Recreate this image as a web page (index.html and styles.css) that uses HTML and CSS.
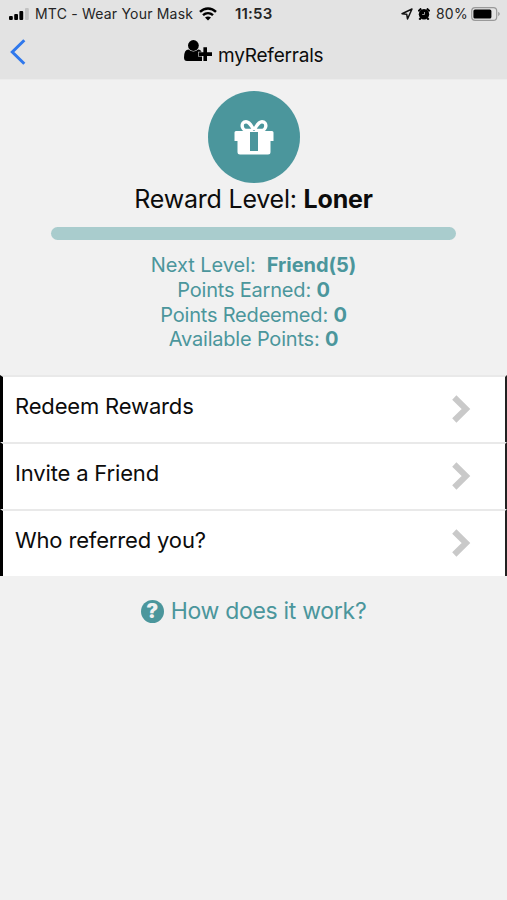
FILE: index.html
```html
<!DOCTYPE html>
<html lang="en">
<head>
  <meta charset="UTF-8">
  <meta name="viewport" content="width=device-width, initial-scale=1.0">
  <title>myReferrals</title>
  <link rel="stylesheet" href="styles.css">
</head>
<body>
  <header class="header">
    <div class="status-bar">
      <svg class="signal" width="20" height="12" viewBox="0 0 20 12">
        <rect x="0" y="8" width="3.8" height="4" rx="1"/>
        <rect x="5.2" y="6" width="3.8" height="6" rx="1"/>
        <rect x="10.4" y="3" width="3.8" height="9" rx="1"/>
        <rect x="16" y="0" width="3.8" height="12" rx="1" fill="#c2c2c2"/>
      </svg>
      <span class="carrier">MTC - Wear Your Mask</span>
      <svg class="wifi" width="18" height="14" viewBox="0 0 18 14" fill="none" stroke="#000" stroke-width="2.4">
        <path d="M1 4.9C5.6 .3 12.4 .3 17 4.9"/>
        <path d="M4 8.2C7 5.4 11 5.4 14 8.2"/>
        <path d="M9 13.6L6 10.6Q9 8.2 12 10.6Z" fill="#000" stroke="none"/>
      </svg>
      <span class="time">11:53</span>
      <div class="status-right">
        <svg width="12" height="12" viewBox="0 0 12 12" fill="none" stroke="#111" stroke-width="1.5" stroke-linejoin="round">
          <path d="M1 5.7L11 1L6.5 11L5.7 6.2Z"/>
        </svg>
        <svg class="alarm" width="12" height="12" viewBox="0 0 12 12">
          <circle cx="6" cy="6.3" r="5.2"/>
          <path d="M.3 3.4L3.2 .5M11.7 3.4L8.8 .5M2.8 10L1.3 11.7M9.2 10l1.500 1.700" stroke="#000" stroke-width="2"/>
          <path d="M6.500 4V6.500H4.200" fill="none" stroke="#bbb" stroke-width=".8"/>
        </svg>
        <span class="percent">80%</span>
        <svg class="battery" width="30" height="14" viewBox="0 0 30 14">
          <rect x=".7" y=".7" width="25" height="12.6" rx="3.4" fill="none" stroke="#999" stroke-width="1.2"/>
          <rect x="2.4" y="2.4" width="18" height="9.2" rx="1.6"/>
          <path d="M27.2 4.8Q30.4 7 27.2 9.2Z" fill="#999"/>
        </svg>
      </div>
    </div>
    <div class="nav-bar">
      <a class="back" href="#" aria-label="Back">
        <svg width="16" height="26" viewBox="0 0 16 26" fill="none" stroke="#2f78ec" stroke-width="3">
          <path d="M14.3 1.3L2.3 13L14.3 24.7"/>
        </svg>
      </a>
      <svg class="user-icon" width="29" height="22" viewBox="0 0 29 22">
        <circle cx="9.4" cy="5.5" r="5.4"/>
        <path d="M4.600 9.500Q9.400 13.500 14.200 9.500C16 9.600 17 10.500 17.600 11.800H14V16.400H18V21H3Q0 21 0 17.500Q0 9.700 4.600 9.500Z"/>
        <path d="M21.200 7.300V20.900M14.600 14.100H28" stroke="#000" stroke-width="3.600"/>
      </svg>
      <h1 class="title">myReferrals</h1>
    </div>
  </header>

  <main class="content">
    <div class="badge">
      <svg width="40" height="36" viewBox="0 0 40 36">
        <g fill="none" stroke="#fff" stroke-width="3.400">
          <path d="M19 11.500H13C7 11.500 6.500 2.700 12 2.700C16 2.700 17.500 7.500 20 11"/>
          <path d="M21 11.500H27C33 11.500 33.500 2.700 28 2.700C24 2.700 22.500 7.500 20 11"/>
        </g>
        <path d="M2 12H38Q39.500 12 39.500 13.500V22H36.500V33Q36.500 35.500 34 35.500H6Q3.500 35.500 3.500 33V22H.5V13.500Q.5 12 2 12Z" fill="#fff"/>
        <path d="M16 13H24V32H16Z" fill="#4b969c"/>
      </svg>
    </div>
    <p class="level">Reward Level: <b>Loner</b></p>
    <div class="progress"></div>

    <div class="points">
      <p class="next-level">Next Level: &nbsp;<b>Friend(5)</b></p>
      <p>Points Earned: <b>0</b></p>
      <p>Points Redeemed: <b>0</b></p>
      <p>Available Points: <b>0</b></p>
    </div>

    <nav class="menu">
      <a class="menu-item" href="#">
        <span>Redeem Rewards</span>
        <svg class="chevron" width="19" height="28" viewBox="0 0 19 28"><path d="M2.300 2.500L14 14L2.300 25.500"/></svg>
      </a>
      <a class="menu-item" href="#">
        <span>Invite a Friend</span>
        <svg class="chevron" width="19" height="28" viewBox="0 0 19 28"><path d="M2.300 2.500L14 14L2.300 25.500"/></svg>
      </a>
      <a class="menu-item" href="#">
        <span>Who referred you?</span>
        <svg class="chevron" width="19" height="28" viewBox="0 0 19 28"><path d="M2.300 2.500L14 14L2.300 25.500"/></svg>
      </a>
    </nav>

    <a class="help" href="#"><span class="help-icon">?</span><span>How does it work?</span></a>
  </main>
</body>
</html>
```
FILE: styles.css
```css
* {
  box-sizing: border-box;
}

body {
  margin: 0;
  min-height: 100vh;
  font-family: 'Inter', sans-serif;
  background: #f1f1f1;
  color: #0c0c0c;
}

p,
h1 {
  margin: 0;
  white-space: nowrap;
}

a {
  color: inherit;
  text-decoration: none;
}

svg {
  display: block;
  flex: none;
}

.header {
  height: 80px;
  background: #e3e3e3;
  border-bottom: 1px solid #ececec;
}

.status-bar {
  display: flex;
  align-items: center;
  height: 27px;
  padding: 0 6px 0 9px;
  font-size: 14px;
  color: #252525;
  white-space: nowrap;
}

.carrier {
  width: 159px;
  margin: 0 5px 0 6px;
  letter-spacing: 0.2px;
}

.time {
  margin-left: 18px;
  font-size: 15px;
  font-weight: 600;
  letter-spacing: 0.2px;
}

.status-right {
  display: flex;
  align-items: center;
  margin-left: auto;
}

.alarm {
  margin: 0 6px 0 5px;
}

.percent {
  width: 32px;
  margin-right: 3px;
  letter-spacing: 0.2px;
}

.nav-bar {
  display: flex;
  height: 52px;
  padding-left: 10px;
}

.back {
  width: 174px;
  padding-top: 12px;
}

.user-icon {
  margin-top: 13px;
}

.title {
  margin: 17px 0 0 5px;
  font-size: 19px;
  font-weight: 400;
  line-height: 24px;
  letter-spacing: -0.2px;
}

.content {
  display: flex;
  flex-direction: column;
  align-items: center;
  padding-top: 11px;
}

.badge {
  display: flex;
  align-items: center;
  justify-content: center;
  width: 92px;
  height: 92px;
  border-radius: 50%;
  background: #4b969c;
}

.level {
  font-size: 25px;
  line-height: 32px;
  letter-spacing: -0.22px;
}

.level b {
  font-weight: 700;
}

.progress {
  width: 405px;
  height: 13px;
  margin-top: 12px;
  border-radius: 7px;
  background: #a9cccd;
}

.points {
  margin-top: 13px;
  font-size: 20px;
  line-height: 24.8px;
  letter-spacing: -0.2px;
  text-align: center;
  color: #4b969c;
}

.next-level {
  letter-spacing: -0.05px;
}

.menu {
  width: 100%;
  margin-top: 23px;
}

.menu-item {
  display: flex;
  align-items: center;
  justify-content: space-between;
  height: 67px;
  padding: 0 34px 2px 12px;
  border-top: 2px solid #e9e9e9;
  border-left: 3px solid #000;
  border-right: 2px solid #222;
  background: #fff;
  font-size: 22px;
  letter-spacing: -0.16px;
}

.menu-item span {
  margin-top: -5px;
}

.chevron {
  fill: none;
  stroke: #c9c9c9;
  stroke-width: 6;
}

.help {
  display: flex;
  align-items: center;
  gap: 7px;
  margin-top: 20px;
  font-size: 23px;
  line-height: 30px;
  letter-spacing: -0.3px;
  color: #4b969c;
}

.help-icon {
  width: 23px;
  height: 23px;
  border-radius: 50%;
  background: #4b969c;
  color: #f1f1f1;
  font-size: 20px;
  font-weight: 900;
  line-height: 23px;
  text-align: center;
}
```
